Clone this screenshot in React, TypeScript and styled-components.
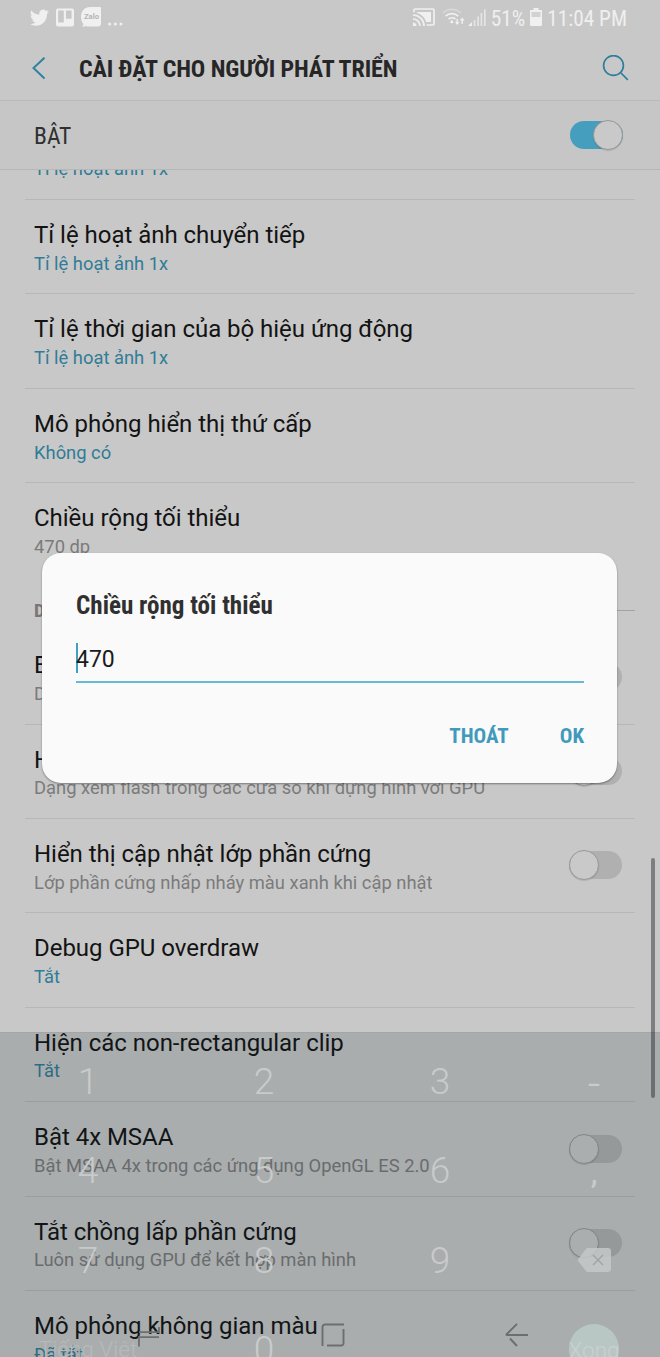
import React from 'react';
import styled, { createGlobalStyle, css } from 'styled-components';

const Global = createGlobalStyle`
  body { margin: 0; background: #c8c8c8; }
  * { box-sizing: border-box; }
`;

const Screen = styled.div`
  position: relative;
  width: 660px;
  height: 1357px;
  overflow: hidden;
  background: #c8c8c8;
  font-family: Roboto, sans-serif;
  display: flex;
  flex-direction: column;
`;

const condensed = css`
  font-family: 'Roboto Condensed', Roboto, sans-serif;
  font-stretch: 75%;
  white-space: nowrap;
`;

const StatusBar = styled.div`
  height: 36px;
  flex: none;
  padding: 0 33px 2px 30px;
  display: flex;
  align-items: center;
  justify-content: space-between;
  color: #efefef;
`;

const StatusGroup = styled.div<{ $gap: number }>`
  display: flex;
  align-items: center;
  gap: ${(p) => p.$gap}px;
`;

const StatusText = styled.span`
  ${condensed}
  font-size: 21.3px;
  line-height: 32px;
  padding-top: 3px;
`;

const WifiSlot = styled.span`
  display: flex;
  margin: 0 -2px 0 2px;
`;

const MoreSlot = styled.span`
  display: flex;
  padding-top: 13px;
`;

const AppBar = styled.header`
  height: 65px;
  flex: none;
  padding: 0 31px 0 31px;
  display: flex;
  align-items: center;
  border-bottom: 1px solid #b9b9b9;
`;

const Heading = styled.h1`
  ${condensed}
  flex: 1;
  margin: 0 0 0 31px;
  padding-top: 1px;
  font-size: 24px;
  letter-spacing: -0.1px;
  line-height: 32px;
  font-weight: 700;
  color: #262626;
`;

const MasterRow = styled.div`
  height: 69px;
  flex: none;
  padding: 0 37px 0 34px;
  display: flex;
  align-items: center;
  justify-content: space-between;
  background: #c6c6c6;
  border-bottom: 1px solid #b6b6b6;
`;

const MasterLabel = styled.span`
  ${condensed}
  padding-top: 2px;
  font-size: 23.6px;
  color: #303030;
`;

const Toggle = styled.span<{ $on?: boolean }>`
  flex: none;
  width: 53px;
  height: 28px;
  border-radius: 14px;
  background: ${(p) => (p.$on ? '#459ebe' : '#b0b0b0')};
  display: flex;
  align-items: center;
  justify-content: ${(p) => (p.$on ? 'flex-end' : 'flex-start')};
`;

const Knob = styled.span`
  width: 30px;
  height: 30px;
  flex: none;
  border-radius: 50%;
  background: #c9c9c9;
  border: 1px solid #999;
  box-shadow: 0 1px 1px rgba(0, 0, 0, 0.12);
`;

const Viewport = styled.main`
  flex: 1;
  min-height: 0;
  overflow: hidden;
`;

const List = styled.div`
  margin-top: -64.4px;
  padding: 0 25px;
`;

const Row = styled.div`
  height: 94.45px;
  padding: 20px 13px 0 9px;
  display: flex;
  justify-content: space-between;
  border-bottom: 1px solid #b7b7b7;
`;

const LastRow = styled(Row)`
  border-bottom-color: transparent;
`;

const RowText = styled.div`
  white-space: nowrap;
`;

const RowTitle = styled.div`
  font-size: 24px;
  letter-spacing: -0.03px;
  line-height: 30px;
  color: #131313;
`;

const RowNote = styled.div<{ $accent?: boolean }>`
  margin-top: 0.6px;
  font-size: 18.36px;
  line-height: 26px;
  color: ${(p) => (p.$accent ? '#317c97' : '#7b7b7b')};
`;

const RowToggle = styled.div`
  padding-top: 12.5px;
`;

const Section = styled.div`
  height: 52.3px;
  padding: 13px 0 0 9px;
  display: flex;
  align-items: center;
  gap: 12px;
`;

const SectionLabel = styled.span`
  ${condensed}
  font-size: 19px;
  font-weight: 700;
  color: #777;
`;

const SectionRule = styled.span`
  flex: 1;
  height: 1px;
  background: #a2a2a2;
`;

const ScrollThumb = styled.div`
  position: absolute;
  left: 651px;
  top: 858px;
  width: 4px;
  height: 240px;
  border-radius: 2px;
  background: #7c7e80;
`;

const Keyboard = styled.div`
  position: absolute;
  left: 0;
  right: 0;
  top: 1032px;
  height: 325px;
  border-top: 1px solid rgba(0, 0, 0, 0.04);
  background: rgba(18, 38, 42, 0.165);
  overflow: hidden;
`;

const Keys = styled.div`
  display: grid;
  grid-template-columns: 176px 176px 176px 132px;
  grid-auto-rows: 89.3px;
  padding-top: 4px;
`;

const Key = styled.div`
  display: flex;
  align-items: center;
  justify-content: center;
  font-size: 37px;
  font-weight: 300;
  color: #c9cbcb;
  line-height: 1;
`;

const MarkKey = styled(Key)`
  padding-top: 4px;
  font-weight: 300;
  font-size: 44px;
`;

const CommaKey = styled(Key)`
  font-size: 30px;
  font-weight: 500;
  padding-top: 5px;
`;

const LanguageKey = styled(Key)`
  font-size: 22.5px;
  color: #b7baba;
  white-space: nowrap;
`;

const DoneCircle = styled.div`
  width: 50px;
  height: 50px;
  margin-top: -2px;
  padding-top: 4px;
  border-radius: 50%;
  background: #b8c7c4;
  color: #cbd0cf;
  font-size: 22.5px;
  display: flex;
  align-items: center;
  justify-content: center;
`;

const NavBar = styled.nav`
  position: absolute;
  left: 0;
  right: 0;
  top: 1311px;
  height: 47px;
  padding: 0 131px 0 138px;
  display: flex;
  align-items: center;
  justify-content: space-between;
`;

const Dialog = styled.section`
  position: absolute;
  left: 42px;
  top: 553px;
  width: 575px;
  height: 230px;
  padding: 37px 33px 0 34px;
  border-radius: 19px;
  background: #fafafa;
  box-shadow: 0 1px 2px rgba(0, 0, 0, 0.4);
`;

const DialogTitle = styled.h2`
  ${condensed}
  margin: 0;
  font-size: 25.1px;
  line-height: 32px;
  font-weight: 700;
  color: #303030;
`;

const Field = styled.div`
  height: 41px;
  margin-top: 20px;
  display: flex;
  align-items: flex-start;
  border-bottom: 2px solid #68b9d3;
`;

const Caret = styled.span`
  width: 2px;
  height: 30px;
  margin-right: -2px;
  margin-top: 1px;
  background: #3fa0c3;
`;

const Value = styled.span`
  font-size: 23px;
  line-height: 36px;
  color: #1b1b1b;
`;

const Actions = styled.div`
  display: flex;
  justify-content: flex-end;
  gap: 51px;
  padding-top: 37px;
`;

const Action = styled.span`
  ${condensed}
  font-size: 21px;
  line-height: 32px;
  font-weight: 700;
  color: #419abb;
`;

type Item = { title: string; note: string; accent?: boolean; toggle?: boolean };

const upper: Item[] = [
  { title: 'Tỉ lệ hình động của cửa sổ', note: 'Tỉ lệ hoạt ảnh 1x', accent: true },
  { title: 'Tỉ lệ hoạt ảnh chuyển tiếp', note: 'Tỉ lệ hoạt ảnh 1x', accent: true },
  { title: 'Tỉ lệ thời gian của bộ hiệu ứng động', note: 'Tỉ lệ hoạt ảnh 1x', accent: true },
  { title: 'Mô phỏng hiển thị thứ cấp', note: 'Không có', accent: true },
];

const lower: Item[] = [
  { title: 'Bắt buộc dựng hình GPU', note: 'Dùng GPU cho bản vẽ 2D', toggle: true },
  { title: 'Hiển thị cập nhật GPU', note: 'Dạng xem flash trong các cửa sổ khi dựng hình với GPU', toggle: true },
  { title: 'Hiển thị cập nhật lớp phần cứng', note: 'Lớp phần cứng nhấp nháy màu xanh khi cập nhật', toggle: true },
  { title: 'Debug GPU overdraw', note: 'Tắt', accent: true },
  { title: 'Hiện các non-rectangular clip', note: 'Tắt', accent: true },
  { title: 'Bật 4x MSAA', note: 'Bật MSAA 4x trong các ứng dụng OpenGL ES 2.0', toggle: true },
  { title: 'Tắt chồng lấp phần cứng', note: 'Luôn sử dụng GPU để kết hợp màn hình', toggle: true },
  { title: 'Mô phỏng không gian màu', note: 'Đã tắt', accent: true },
];

function Setting({ item, last }: { item: Item; last?: boolean }) {
  const Box = last ? LastRow : Row;
  return (
    <Box>
      <RowText>
        <RowTitle>{item.title}</RowTitle>
        <RowNote $accent={item.accent}>{item.note}</RowNote>
      </RowText>
      {item.toggle && (
        <RowToggle>
          <Toggle>
            <Knob />
          </Toggle>
        </RowToggle>
      )}
    </Box>
  );
}

const TwitterIcon = () => (
  <svg width="19" height="17" viewBox="0 1.5 24 20.5" fill="#f0f0f0" preserveAspectRatio="none">
    <path d="M23.95 4.57a10 10 0 0 1-2.82.77 4.96 4.96 0 0 0 2.16-2.72c-.95.55-2 .96-3.13 1.18a4.92 4.92 0 0 0-8.38 4.48C7.69 8.1 4.07 6.13 1.64 3.16a4.92 4.92 0 0 0 1.52 6.57 4.9 4.9 0 0 1-2.23-.61v.06a4.92 4.92 0 0 0 3.95 4.83 5 5 0 0 1-2.21.08 4.94 4.94 0 0 0 4.6 3.42A9.87 9.87 0 0 1 0 19.54a14 14 0 0 0 7.55 2.21c9.05 0 14-7.5 14-13.98 0-.21 0-.42-.02-.63a9.94 9.94 0 0 0 2.46-2.55z" />
  </svg>
);

const BoardIcon = () => (
  <svg width="18" height="19" viewBox="0 0 18 19">
    <path fill="#f0f0f0" d="M2 .5h14a2 2 0 0 1 2 2v14a2 2 0 0 1-2 2H2a2 2 0 0 1-2-2v-14a2 2 0 0 1 2-2z" />
    <path fill="#c8c8c8" d="M2.200 2.600h5.600v12H2.200zM10 2.600h5.600v8.200H10z" />
  </svg>
);

const ZaloIcon = () => (
  <svg width="20" height="20" viewBox="0 0 20 20">
    <path fill="#f0f0f0" d="M9 0h10a1 1 0 0 1 1 1v15a3 3 0 0 1-3 3.500H8c-1.500 0-2.500-.2-3.500-.6-1 .7-2.300.9-3.500.6.9-.6 1.400-1.500 1.300-2.600C.8 15.200 0 12.500 0 9.500 0 4 4 0 9 0z" />
    <text x="10.500" y="11.900" textAnchor="middle" fontFamily="Roboto, sans-serif" fontSize="7.700" fontWeight="700" fill="#b4b4b4">Zalo</text>
  </svg>
);

const DotsIcon = () => (
  <svg width="15" height="4" viewBox="0 0 15 4" fill="#f0f0f0">
    <circle cx="1.600" cy="2" r="1.500" />
    <circle cx="7.300" cy="2" r="1.500" />
    <circle cx="13" cy="2" r="1.500" />
  </svg>
);

const CastIcon = () => (
  <svg width="22" height="18" viewBox="0 0 22 18" fill="none" stroke="#f0f0f0" strokeWidth="1.700">
    <path d="M1 4.200V2.200A1.200 1.200 0 0 1 2.200 1h17.600A1.200 1.200 0 0 1 21 2.200v13.600a1.200 1.200 0 0 1-1.200 1.200H13.500" />
    <path d="M0 7A11 11 0 0 1 11 18M0 11A7 7 0 0 1 7 18" />
    <path d="M0 14.500a3.500 3.500 0 0 1 3.500 3.500H0z" fill="#f0f0f0" stroke="none" />
    <path d="M4 4h14v10H13C11.800 9.500 8.500 6.200 4 5z" fill="#f0f0f0" stroke="none" />
  </svg>
);

const WifiIcon = () => (
  <svg width="23" height="18" viewBox="0 0 23 18" fill="none" stroke="#f0f0f0" strokeWidth="1.700">
    <path d="M.8 5a13 13 0 0 1 18 0" opacity=".4" />
    <path d="M3.600 8.200a9 9 0 0 1 12.600 0M6.500 11.200a5 5 0 0 1 6.800-.2" />
    <circle cx="9.800" cy="13.800" r="1.500" fill="#f0f0f0" stroke="none" />
    <path d="M15.200 11v5M20.200 16v-5" strokeWidth="1.400" />
    <path d="M12.900 14h4.600l-2.300 3zM17.900 12.500h4.600l-2.300-3z" fill="#f0f0f0" stroke="none" />
  </svg>
);

const SignalIcon = () => (
  <svg width="18" height="17" viewBox="0 0 18 17" fill="#f0f0f0">
    <path d="M0 17l4-4v4z" />
    <path d="M5.700 11h1.600v6H5.700zM9.300 7.500h1.600V17H9.300zM12.600 4h1.600v13h-1.600zM16 .5h1.600V17H16z" opacity=".75" />
  </svg>
);

const BatteryIcon = () => (
  <svg width="12" height="18" viewBox="0 0 12 18">
    <path fill="#f0f0f0" d="M3.500 0h5v2H11a1 1 0 0 1 1 1v14a1 1 0 0 1-1 1H1a1 1 0 0 1-1-1V3a1 1 0 0 1 1-1h2.500z" />
    <path fill="#d2d2d2" d="M1.500 4h9v5h-9z" />
  </svg>
);

const BackChevron = () => (
  <svg width="17" height="23" viewBox="0 0 17 23" fill="none" stroke="#2f839f" strokeWidth="2">
    <path d="M13.500 .7L2.500 11 13.500 21.500" />
  </svg>
);

const SearchIcon = () => (
  <svg width="27" height="27" viewBox="0 0 27 27" fill="none" stroke="#2f7f9b" strokeWidth="1.700">
    <circle cx="11.500" cy="10.500" r="9.900" />
    <path d="M18.500 17.500l7.300 7.300" />
  </svg>
);

const BackspaceIcon = () => (
  <svg width="33" height="24" viewBox="0 0 33 24">
    <path fill="#c6c8c8" fillOpacity=".85" d="M10 0h20a3 3 0 0 1 3 3v18a3 3 0 0 1-3 3H10c-1 0-1.500-.5-2-1L.5 13.500a2 2 0 0 1 0-3L8 1c.5-.6 1-1 2-1z" />
    <path stroke="#a2a4a5" strokeWidth="1.500" d="M15 7l10 10M25 7L15 17" />
  </svg>
);

const RecentsIcon = () => (
  <svg width="22" height="24" viewBox="0 0 22 24" fill="none" stroke="#6c6e6f" strokeWidth="1.800">
    <path d="M1 9.200h20V4M21 14.200H1V23.500" />
  </svg>
);

const HomeIcon = () => (
  <svg width="24" height="24" viewBox="0 0 24 24" fill="none" stroke="#6c6e6f" strokeWidth="1.900">
    <path d="M1.500 23V4a2.500 2.500 0 0 1 2.500-2.500h19M22.500 6V20a2.500 2.500 0 0 1-2.500 2.500H6" />
  </svg>
);

const NavBackIcon = () => (
  <svg width="24" height="24" viewBox="0 0 24 24" fill="none" stroke="#6c6e6f" strokeWidth="1.900" strokeLinejoin="round">
    <path d="M12 .8L1.700 11.200q-.6.800.3.800H23M5 15.500l7 7.500" />
  </svg>
);

export default function App() {
  return (
    <Screen>
      <Global />
      <StatusBar>
        <StatusGroup $gap={7}>
          <TwitterIcon />
          <BoardIcon />
          <ZaloIcon />
          <MoreSlot>
            <DotsIcon />
          </MoreSlot>
        </StatusGroup>
        <StatusGroup $gap={5}>
          <CastIcon />
          <WifiSlot>
            <WifiIcon />
          </WifiSlot>
          <SignalIcon />
          <StatusText>51%</StatusText>
          <BatteryIcon />
          <StatusText>11:04 PM</StatusText>
        </StatusGroup>
      </StatusBar>
      <AppBar>
        <BackChevron />
        <Heading>CÀI ĐẶT CHO NGƯỜI PHÁT TRIỂN</Heading>
        <SearchIcon />
      </AppBar>
      <MasterRow>
        <MasterLabel>BẬT</MasterLabel>
        <Toggle $on>
          <Knob />
        </Toggle>
      </MasterRow>
      <Viewport>
        <List>
          {upper.map((item) => (
            <Setting key={item.title} item={item} />
          ))}
          <Setting item={{ title: 'Chiều rộng tối thiểu', note: '470 dp' }} last />
          <Section>
            <SectionLabel>DỰNG HÌNH</SectionLabel>
            <SectionRule />
          </Section>
          {lower.map((item) => (
            <Setting key={item.title} item={item} />
          ))}
        </List>
      </Viewport>
      <ScrollThumb />
      <Keyboard>
        <Keys>
          <Key>1</Key>
          <Key>2</Key>
          <Key>3</Key>
          <MarkKey>-</MarkKey>
          <Key>4</Key>
          <Key>5</Key>
          <Key>6</Key>
          <CommaKey>,</CommaKey>
          <Key>7</Key>
          <Key>8</Key>
          <Key>9</Key>
          <Key>
            <BackspaceIcon />
          </Key>
          <LanguageKey>Tiếng Việt</LanguageKey>
          <Key>0</Key>
          <Key />
          <Key>
            <DoneCircle>Xong</DoneCircle>
          </Key>
        </Keys>
      </Keyboard>
      <NavBar>
        <RecentsIcon />
        <HomeIcon />
        <NavBackIcon />
      </NavBar>
      <Dialog>
        <DialogTitle>Chiều rộng tối thiểu</DialogTitle>
        <Field>
          <Caret />
          <Value>470</Value>
        </Field>
        <Actions>
          <Action>THOÁT</Action>
          <Action>OK</Action>
        </Actions>
      </Dialog>
    </Screen>
  );
}
